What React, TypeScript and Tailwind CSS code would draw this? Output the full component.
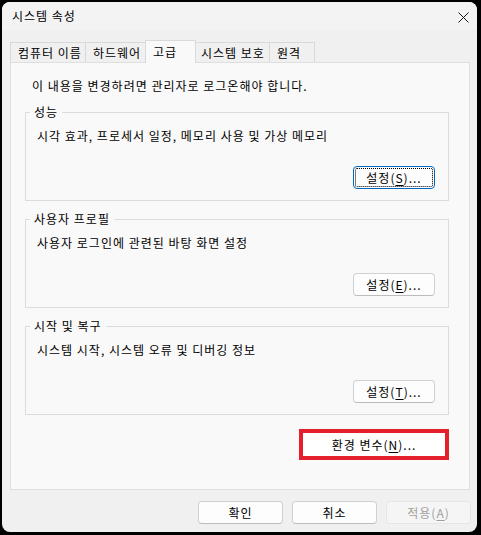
import type { ReactNode } from "react";

const FONT = "font-['Noto_Sans_CJK_KR','Noto_Sans',sans-serif]";

function Key({ children }: { children: ReactNode }) {
  return <span className="underline underline-offset-2">{children}</span>;
}

function Tab({
  label,
  width,
  pad,
  active,
  first,
}: {
  label: string;
  width: string;
  pad: string;
  active?: boolean;
  first?: boolean;
}) {
  if (active) {
    return (
      <div
        className={`${width} ${pad} ${first ? "" : "-ml-px"} relative z-10 -mb-px h-[23px] border border-b-0 border-[#d9d9d9] bg-[#f9f9f9] pt-[3px] leading-[16px]`}
      >
        {label}
      </div>
    );
  }
  return (
    <div
      className={`${width} ${pad} ${first ? "" : "-ml-px"} h-[20px] border border-b-0 border-[#d9d9d9] bg-[#f0f0f0] pt-[2px] leading-[16px]`}
    >
      {label}
    </div>
  );
}

function SmallButton({ children, focused }: { children: ReactNode; focused?: boolean }) {
  return (
    <button
      className={`flex h-[23px] w-[82px] items-center justify-center self-end rounded-[4px] border bg-[#fdfdfd] leading-[16px] ${
        focused
          ? "border-[#0067c0] outline-1 outline-dotted outline-black -outline-offset-3"
          : "border-[#d0d0d0] border-b-[#bcbcbc]"
      }`}
    >
      {children}
    </button>
  );
}

function Group({
  title,
  text,
  button,
  className = "",
}: {
  title: string;
  text: string;
  button: ReactNode;
  className?: string;
}) {
  return (
    <fieldset className={`w-full border border-[#dcdcdc] ${className}`}>
      <legend className="ml-[4px] px-[4px] leading-[16px]">{title}</legend>
      <div className="flex flex-col pb-[11px] pl-[11px] pr-[13px] pt-[8px]">
        <p className="leading-[16px]">{text}</p>
        <div className="mt-[22px] flex justify-end">{button}</div>
      </div>
    </fieldset>
  );
}

function DialogButton({ children, disabled }: { children: ReactNode; disabled?: boolean }) {
  return (
    <button
      className={`flex h-[23px] w-[85px] items-center justify-center rounded-[4px] border leading-[16px] ${
        disabled
          ? "border-[#e5e5e5] bg-[#f5f5f5] text-[#a0a0a0]"
          : "border-[#d0d0d0] border-b-[#bcbcbc] bg-[#fdfdfd] text-black"
      }`}
    >
      {children}
    </button>
  );
}

export default function App() {
  return (
    <div
      className={`h-[535px] w-[481px] bg-black pl-[2px] pt-[2px] text-[12px] tracking-[1px] text-black ${FONT}`}
    >
      <div className="flex h-[530px] w-[475px] flex-col overflow-hidden rounded-[8px] bg-[#f0f0f0]">
        {/* title bar */}
        <div className="flex h-[28px] items-center justify-between bg-[#f3f3f3] pl-[10px] pr-[8px]">
          <span className="leading-[16px]">시스템 속성</span>
          <svg width="11" height="11" viewBox="0 0 11 11" className="mt-[2px]">
            <path d="M0.5 0.5 L10.5 10.5 M10.5 0.5 L0.5 10.5" stroke="#1a1a1a" strokeWidth="1" fill="none" />
          </svg>
        </div>

        <div className="mt-[10px] pl-[8px]">
          {/* tabs */}
          <div className="flex h-[22px] items-end">
            <Tab label="컴퓨터 이름" width="w-[76px]" pad="pl-[7px]" first />
            <Tab label="하드웨어" width="w-[61px]" pad="pl-[7px]" />
            <Tab label="고급" width="w-[51px]" pad="pl-[7px]" active />
            <Tab label="시스템 보호" width="w-[75px]" pad="pl-[5px]" />
            <Tab label="원격" width="w-[46px]" pad="pl-[7px]" />
          </div>

          {/* panel */}
          <div className="h-[428px] w-[460px] border border-[#dfdfdf] bg-[#f9f9f9] pl-[14px] pt-[15px]">
            <div className="flex w-[424px] flex-col">
              <p className="pl-[7px] leading-[16px]">이 내용을 변경하려면 관리자로 로그온해야 합니다.</p>

              <Group
                className="mt-[10px]"
                title="성능"
                text="시각 효과, 프로세서 일정, 메모리 사용 및 가상 메모리"
                button={
                  <SmallButton focused>
                    설정(<Key>S</Key>)...
                  </SmallButton>
                }
              />
              <Group
                className="mt-[10px]"
                title="사용자 프로필"
                text="사용자 로그인에 관련된 바탕 화면 설정"
                button={
                  <SmallButton>
                    설정(<Key>E</Key>)...
                  </SmallButton>
                }
              />
              <Group
                className="mt-[10px]"
                title="시작 및 복구"
                text="시스템 시작, 시스템 오류 및 디버깅 정보"
                button={
                  <SmallButton>
                    설정(<Key>T</Key>)...
                  </SmallButton>
                }
              />

              <div className="mt-[14px] h-[31px] w-[150px] self-end border-4 border-[#e3202b]">
                <button className="flex h-full w-full items-center justify-center bg-white leading-[16px]">
                  환경 변수(<Key>N</Key>)...
                </button>
              </div>
            </div>
          </div>
        </div>

        {/* dialog buttons */}
        <div className="mt-[11px] flex justify-end gap-[9px] pr-[6px]">
          <DialogButton>확인</DialogButton>
          <DialogButton>취소</DialogButton>
          <DialogButton disabled>
            적용(<Key>A</Key>)
          </DialogButton>
        </div>
      </div>
    </div>
  );
}
